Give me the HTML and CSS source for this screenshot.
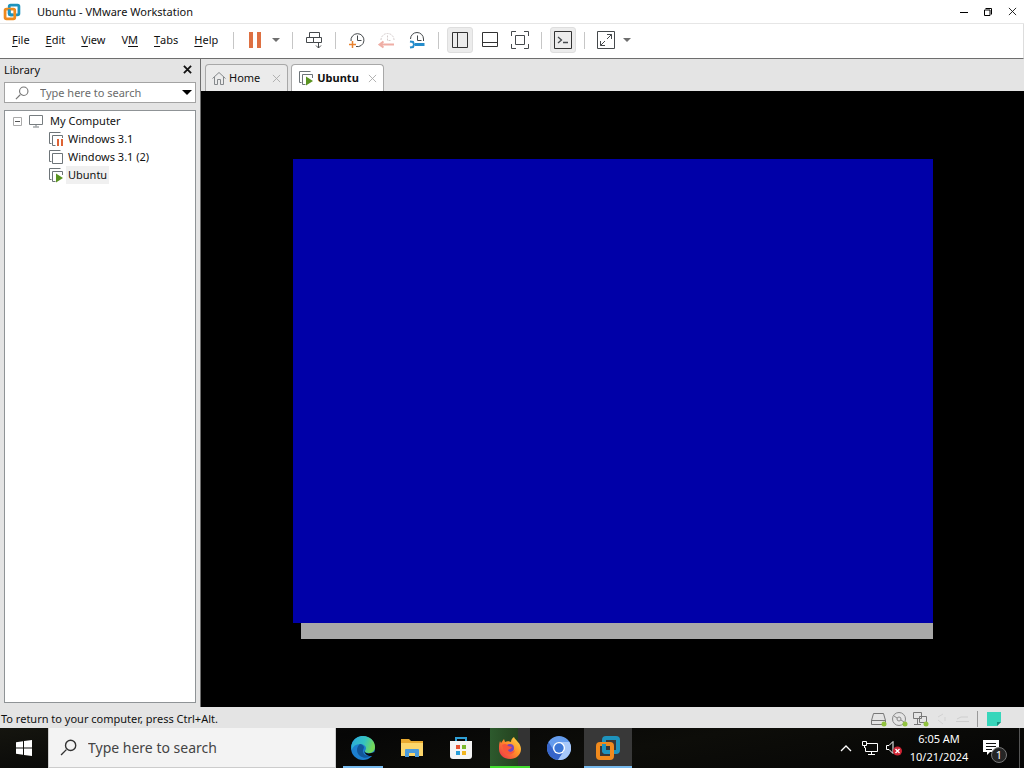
FILE: index.html
```html
<!DOCTYPE html>
<html lang="en">
<head>
  <meta charset="UTF-8" />
  <meta name="viewport" content="width=device-width, initial-scale=1.0" />
  <title>Ubuntu - VMware Workstation</title>
  <link rel="stylesheet" href="styles.css">
</head>
<body>
  <svg class="defs" aria-hidden="true">
    <symbol id="vmware" viewBox="0 0 26 26">
      <g fill="none" stroke-width="4" stroke-linejoin="round">
        <rect x="9" y="3" width="14" height="14" rx="2" stroke="#1e93bd" />
        <rect x="3" y="9" width="14" height="14" rx="2" stroke="#f08a1d" />
        <path d="M9 9v6a2 2 0 0 0 2 2h3" stroke="#1e93bd" />
      </g>
    </symbol>
    <symbol id="vm" viewBox="0 0 16 16">
      <path d="M12.500 1.500h-11v11h2M4.500 4.500h10v10h-10z" fill="none" stroke="#6d7478" />
    </symbol>
    <symbol id="vm-on" viewBox="0 0 16 16">
      <path d="M12.500 1.500h-11v11h2M14.500 8v-3.500h-10v10h3" fill="none" stroke="#6d7478" />
      <path d="M8 6.500l7 4.500-7 4.500z" fill="#5a9321" />
    </symbol>
    <symbol id="vm-paused" viewBox="0 0 16 16">
      <path d="M12.500 1.500h-11v11h2M14.500 7v-2.500h-10v10h3" fill="none" stroke="#6d7478" />
      <path d="M9 8h2v7h-2zM13 8h2v7h-2z" fill="#de6335" />
    </symbol>
    <symbol id="search" viewBox="0 0 16 16">
      <path d="M1 15l5-5" fill="none" stroke="currentColor" stroke-width="1.300" />
      <circle cx="10" cy="6" r="4.800" fill="none" stroke="currentColor" stroke-width="1.300" />
    </symbol>
    <symbol id="close" viewBox="0 0 10 10">
      <path d="M1 1l8 8M9 1l-8 8" fill="none" stroke="currentColor" />
    </symbol>
    <symbol id="arrow" viewBox="0 0 8 4">
      <path d="M0 0h8l-4 4z" fill="currentColor" />
    </symbol>
  </svg>

  <div class="window">
    <header class="titlebar">
      <svg class="logo"><use href="#vmware" /></svg>
      <h1>Ubuntu - VMware Workstation</h1>
      <div class="window-buttons">
        <button aria-label="Minimize"><svg width="10" height="10"><path d="M1 5.500h8" stroke="#000" /></svg></button>
        <button aria-label="Restore"><svg width="10" height="10"><path d="M1.500 3h5.500v5.500h-5.500z" fill="none" stroke="#000" /><path d="M2.500 1.500h6v6" fill="none" stroke="#000" /></svg></button>
        <button aria-label="Close"><svg width="9" height="9"><use href="#close" /></svg></button>
      </div>
    </header>

    <div class="menubar">
      <nav class="menus">
        <button><u>F</u>ile</button>
        <button><u>E</u>dit</button>
        <button><u>V</u>iew</button>
        <button>V<u>M</u></button>
        <button><u>T</u>abs</button>
        <button><u>H</u>elp</button>
      </nav>
      <div class="tools split">
        <button aria-label="Suspend"><svg width="14" height="16"><path d="M1 0h4v16h-4zM9 0h4v16h-4z" fill="#de7042" /></svg></button>
        <button class="drop" aria-label="Power options"><svg width="8" height="4"><use href="#arrow" /></svg></button>
      </div>
      <div class="tools">
        <button aria-label="Send Ctrl+Alt+Del"><svg width="18" height="18"><path d="M4.500 1.500h10v5h-10zM1.500 6.500h7v5h-7zM8.500 6.500h8v5h-8zM13.500 11v6M11 14.500l2.500 2.500 2.500-2.500" fill="none" stroke="#45494c" /></svg></button>
      </div>
      <div class="tools">
        <button aria-label="Take snapshot">
          <svg width="18" height="18"><path d="M3 10a6.500 6.500 0 1 1 5 5.500M9.500 4.500v5h4" fill="none" stroke="#45494c" /><path d="M4.500 10v7M1 13.500h7" stroke="#e8822f" stroke-width="1.500" /></svg>
        </button>
        <button aria-label="Revert snapshot" disabled>
          <svg width="18" height="18"><path d="M3 9a6.500 6.500 0 0 1 13 0M9.500 4.500v5h4" fill="none" stroke="#d4cccc" stroke-dasharray="2 1" /><path d="M2 13.500h14M5.500 10.500l-4 3 4 3" fill="none" stroke="#efaea5" stroke-width="2" /></svg>
        </button>
        <button aria-label="Manage snapshots">
          <svg width="18" height="18"><path d="M2.500 8a6.500 6.500 0 0 1 13 0v2M9.500 4.500v5h4" fill="none" stroke="#45494c" /><path d="M7 13.500h9.500" stroke="#258ccb" stroke-width="3" /><path d="M2 10.500l3 .5 1 2.500-1 2.500-3 .5" fill="none" stroke="#258ccb" stroke-width="2" /></svg>
        </button>
      </div>
      <div class="tools">
        <button class="pressed" aria-label="Show library"><svg width="18" height="18"><path d="M1.500 1.500h15v15h-15zM6.500 2v14" fill="none" stroke="#333" /></svg></button>
        <button aria-label="Show thumbnail bar"><svg width="18" height="18"><path d="M1.500 1.500h15v14h-15zM2 11.500h14" fill="none" stroke="#333" /></svg></button>
        <button aria-label="Full screen"><svg width="18" height="18"><path d="M4.500 4.500h9v9h-9zM.5 5v-4.500h4.500M13 .5h4.500v4.500M17.500 13v4.500h-4.500M5 17.500h-4.500v-4.500" fill="none" stroke="#45494c" /></svg></button>
      </div>
      <div class="tools">
        <button class="pressed" aria-label="Console view"><svg width="18" height="18"><path d="M.5.5h17v17h-17z" fill="none" stroke="#333" /><path d="M4 6l3.500 3-3.500 3M9 11.500h5" fill="none" stroke="#45494c" stroke-width="1.300" /></svg></button>
      </div>
      <div class="tools split">
        <button aria-label="Stretch guest"><svg width="18" height="18"><path d="M.5.5h17v17h-17zM10 8l4.500-4.500M10 3.500h4.500v4.500M8 10l-4.500 4.500M3.500 10v4.500h4.500" fill="none" stroke="#45494c" /></svg></button>
        <button class="drop" aria-label="Stretch options"><svg width="8" height="4"><use href="#arrow" /></svg></button>
      </div>
    </div>

    <div class="workspace">
      <aside class="library">
        <div class="library-header">
          <h2>Library</h2>
          <button aria-label="Close library"><svg width="9" height="9"><use href="#close" /></svg></button>
        </div>
        <div class="library-search">
          <svg width="14" height="14"><use href="#search" /></svg>
          <input type="text" placeholder="Type here to search" aria-label="Search library">
          <button aria-label="Search options"><svg width="10" height="5" viewBox="0 0 8 4"><use href="#arrow" /></svg></button>
        </div>
        <ul class="tree">
          <li class="root">
            <svg width="9" height="9"><path d="M.5.5h8v8h-8z" fill="none" stroke="#aaa" /><path d="M2 4.500h5" stroke="#555" /></svg>
            <svg width="16" height="14"><path d="M1.500 1.500h13v9h-13zM5 13h6M8 10.500v2" fill="none" stroke="#777d80" /></svg>
            <span>My Computer</span>
          </li>
          <li><svg width="16" height="16"><use href="#vm-paused" /></svg><span>Windows 3.1</span></li>
          <li><svg width="16" height="16"><use href="#vm" /></svg><span>Windows 3.1 (2)</span></li>
          <li class="selected"><svg width="16" height="16"><use href="#vm-on" /></svg><span>Ubuntu</span></li>
        </ul>
      </aside>

      <main class="console">
        <div class="tabs">
          <div class="tab">
            <svg width="14" height="14"><path d="M.5 7.500l6.500-6 6.500 6M2.500 6v7.500h3v-5h3v5h3v-7.500" fill="none" stroke="#85898c" /></svg>
            <a href="#home">Home</a>
            <button aria-label="Close Home"><svg width="9" height="9"><use href="#close" /></svg></button>
          </div>
          <div class="tab active">
            <svg width="16" height="16"><use href="#vm-on" /></svg>
            <a href="#ubuntu">Ubuntu</a>
            <button aria-label="Close Ubuntu"><svg width="9" height="9"><use href="#close" /></svg></button>
          </div>
        </div>
        <div class="guest">
          <div class="screen">
            <div class="screen-text"></div>
            <div class="screen-status"></div>
          </div>
        </div>
      </main>
    </div>

    <footer class="statusbar">
      <p>To return to your computer, press Ctrl+Alt.</p>
      <div class="devices">
        <svg width="18" height="16"><path d="M3.500 2.500h10l2 7h-14zM1.500 9.500h14v4h-14z" fill="none" stroke="#777" /><circle cx="14" cy="13" r="2.500" fill="#91c23e" /></svg>
        <svg width="18" height="16"><circle cx="8" cy="8" r="6.500" fill="none" stroke="#888" /><circle cx="8" cy="8" r="2" fill="none" stroke="#888" /><path d="M3 5l3 2M10 9l3 2" stroke="#888" /><circle cx="14" cy="13" r="2.500" fill="#91c23e" /></svg>
        <svg width="18" height="16"><path d="M1.500 1.500h8v6h-8zM7.500 5.500h7v6h-7zM5.500 8v5M2 13.500h7" fill="none" stroke="#777" /><circle cx="14" cy="13" r="2.500" fill="#91c23e" /></svg>
        <svg width="18" height="16"><path d="M5 6l5-3M5 9l5 4M12 6v4" fill="none" stroke="#d2d2d2" /></svg>
        <svg width="18" height="16"><path d="M3 8l4-2h7M2 10.500h13" fill="none" stroke="#cecece" /></svg>
      </div>
      <svg class="messages" width="16" height="16"><path d="M1 1h14v10l-4 4h-10z" fill="#38d6bb" /><path d="M15 11h-4v4z" fill="#168f7d" /></svg>
    </footer>
  </div>

  <div class="taskbar">
    <button class="start" aria-label="Start">
      <svg width="16" height="16"><path d="M0 2.200l7-1v6.300h-7zM8 1.100l8-1.100v7.500h-8zM0 8.500h7v6.300l-7-1zM8 8.500h8v7.500l-8-1.100z" fill="#fff" /></svg>
    </button>
    <label class="task-search">
      <svg width="17" height="17"><use href="#search" /></svg>
      <input type="text" placeholder="Type here to search" aria-label="Type here to search">
    </label>
    <div class="apps">
      <button class="app open" aria-label="Microsoft Edge">
        <svg width="26" height="26" viewBox="0 0 26 26">
          <defs><linearGradient id="edge" x1="0" y1="0" x2="1" y2=".3"><stop offset="0" stop-color="#2aa7e0" /><stop offset=".6" stop-color="#35c3c0" /><stop offset="1" stop-color="#74d858" /></linearGradient></defs>
          <circle cx="13" cy="13" r="12" fill="#1c7fd0" />
          <path d="M1.500 10c2-7 7-9 11.500-9 7 0 12 5 12 11 0 4-3 6-6 6s-4.500-1-4-2c3-4-1-7-5-7s-7 2-8.500 6z" fill="url(#edge)" />
          <path d="M10 9c-4 3-4 9 0 12 4 3 9 2 12-1-3 1.500-8 1-9-3-.5-2 1-3 1-5-1-2-2.500-3-4-3z" fill="#125699" />
          <path d="M14 15.500c1 3 5 4 10 1.500l1 1-1 2.500c-4 1.500-9 0-10-5z" fill="#080808" />
        </svg>
      </button>
      <button class="app" aria-label="File Explorer">
        <svg width="24" height="22" viewBox="0 0 24 22">
          <path d="M1 2h8l2 2h12v15h-22z" fill="#e9aa30" />
          <path d="M1 6h22v13h-22z" fill="#fcd66b" />
          <path d="M5 20v-7q0-1 1-1h12q1 0 1 1v7h-4v-4h-6v4z" fill="#4b9bdc" />
        </svg>
      </button>
      <button class="app" aria-label="Microsoft Store">
        <svg width="24" height="24" viewBox="0 0 24 24">
          <path d="M7 6v-4h10v4" fill="none" stroke="#2f9fd5" stroke-width="2" />
          <path d="M1 5h22v15q0 3-3 3h-16q-3 0-3-3z" fill="#f4f4f4" />
          <path d="M7 9h4v4h-4z" fill="#e65332" /><path d="M13 9h4v4h-4z" fill="#79b82d" />
          <path d="M7 15h4v4h-4z" fill="#2a9ed8" /><path d="M13 15h4v4h-4z" fill="#f1b51e" />
        </svg>
      </button>
      <button class="app attention" aria-label="Firefox">
        <svg width="24" height="24" viewBox="0 0 24 24">
          <defs><linearGradient id="fox" x1="1" y1="0" x2="0" y2="1"><stop offset="0" stop-color="#ffe34a" /><stop offset=".45" stop-color="#ff9229" /><stop offset="1" stop-color="#ec264f" /></linearGradient></defs>
          <path d="M2 5l1 2 3-4 1 3c2-1 4-1 6 0 0-2 1-4 3-5 1 3 7 6 7 12 0 6-5 10-11 10s-11-4-11-10c0-3 0-5 1-8z" fill="url(#fox)" />
          <circle cx="12" cy="12" r="4" fill="#7447bd" />
          <path d="M4 9c3-2 5-1 6 1l4 1c-1 2-3 2-4 3 1 3 5 2 7 0-1 5-8 6-11 2z" fill="#f9573a" />
        </svg>
      </button>
      <button class="app" aria-label="Chromium">
        <svg width="24" height="24" viewBox="0 0 24 24">
          <circle cx="12" cy="12" r="12" fill="#659ced" />
          <path d="M1.600 6a12 12 0 0 0 9.400 18l6-9-10 0z" fill="#3765c9" />
          <path d="M12 6h10.400a12 12 0 0 1-11.400 18l6-9z" fill="#a7c8fa" />
          <circle cx="12" cy="12" r="6" fill="#fff" /><circle cx="12" cy="12" r="4.700" fill="#3b76d6" />
        </svg>
      </button>
      <button class="app current" aria-label="VMware Workstation"><svg width="26" height="26"><use href="#vmware" /></svg></button>
    </div>
    <div class="tray">
      <button aria-label="Hidden icons"><svg width="12" height="8"><path d="M1 7l5-5 5 5" fill="none" stroke="#fff" stroke-width="1.300" /></svg></button>
      <button aria-label="Network"><svg width="18" height="16"><path d="M6 3.500h10.500v8h-12v-4M1.500 1.500h4v4h-4zM3.500 6v2M10.500 12v2M7 14.500h7" fill="none" stroke="#fff" /></svg></button>
      <button aria-label="Volume muted"><svg width="18" height="16"><path d="M1.500 5.500h2.500l4-4v12l-4-4h-2.500z" fill="none" stroke="#fff" /><circle cx="12.500" cy="11" r="4.500" fill="#cf2434" /><path d="M10.500 9l4 4M14.500 9l-4 4" stroke="#fff" stroke-width="1.300" /></svg></button>
      <div class="clock"><time>6:05 AM</time><time>10/21/2024</time></div>
      <button class="notifications" aria-label="1 notification">
        <svg width="18" height="18"><path d="M1 1h16v12h-9l-3 3v-3h-4z" fill="#fff" /><path d="M4 4.500h10M4 7.500h10M4 10.500h6" stroke="#111" /></svg>
        <span class="count">1</span>
      </button>
    </div>
  </div>
</body>
</html>
```
FILE: styles.css
```css
* {
  box-sizing: border-box;
  margin: 0;
  padding: 0;
}
body {
  display: flex;
  flex-direction: column;
  height: 100vh;
  overflow: hidden;
  font-family: 'Noto Sans', 'Open Sans', sans-serif;
  font-size: 11px;
  line-height: 18px;
  color: #111;
  background: #e4e4e4;
}
button, input {
  font: inherit;
  color: inherit;
  background: none;
  border: none;
}
button {
  display: flex;
  align-items: center;
  justify-content: center;
}
svg {
  flex-shrink: 0;
}
a {
  color: inherit;
  text-decoration: none;
}
input {
  min-width: 0;
  flex: 1;
  outline: none;
}
input::placeholder {
  color: #6b6b6b;
  opacity: 1;
}
.defs {
  display: none;
}
.window {
  flex: 1;
  min-height: 0;
  display: flex;
  flex-direction: column;
}

/* title bar */
.titlebar {
  display: flex;
  align-items: center;
  height: 24px;
  padding-left: 3px;
  background: #fff;
  border-bottom: 1px solid #e6e6e6;
}
.logo {
  width: 18px;
  height: 18px;
  margin-right: 16px;
}
h1, h2 {
  font-size: 11px;
  font-weight: normal;
}
.window-buttons {
  display: flex;
  margin-left: auto;
}
.window-buttons button {
  width: 24px;
  height: 22px;
}

/* menus and toolbar */
.menubar {
  display: flex;
  align-items: center;
  height: 35px;
  padding: 0 0 2px 12px;
  background: #fff;
  border-right: 1px solid #ddd;
  border-bottom: 1px solid #6e6e6e;
}
.menus {
  display: flex;
  gap: 16px;
  margin-right: 15px;
}
u {
  text-underline-offset: 2px;
}
.tools {
  display: flex;
  gap: 4px;
}
.tools::before {
  content: '';
  align-self: center;
  width: 1px;
  height: 17px;
  margin-right: 4px;
  background: #c6c6c6;
}
.tools + .tools {
  margin-left: 8px;
}
.tools button {
  width: 26px;
  height: 26px;
  border-radius: 3px;
}
.tools.split {
  gap: 0;
}
.tools.split::before {
  margin-right: 8px;
}
.tools .drop {
  width: 16px;
  color: #6e6e6e;
}
.tools .pressed {
  background: #ececec;
  border: 1px solid #dedede;
}

.workspace {
  flex: 1;
  min-height: 0;
  display: flex;
}

/* library */
.library {
  flex: 0 0 200px;
  min-width: 0;
  display: flex;
  flex-direction: column;
  padding: 0 4px 4px;
}
.library-header {
  display: flex;
  align-items: center;
  justify-content: space-between;
  height: 23px;
  padding-bottom: 2px;
}
.library-header button {
  width: 18px;
  height: 18px;
}
.library-header svg {
  stroke-width: 2px;
}
.library-search {
  display: flex;
  align-items: center;
  height: 21px;
  margin-bottom: 7px;
  padding: 0 3px 0 10px;
  background: #fff;
  border: 1px solid #a3a3a3;
  color: #777;
}
.library-search input {
  width: 100%;
  margin-left: 11px;
}
.library-search button {
  color: #000;
}
.tree {
  flex: 1;
  padding-top: 1px;
  list-style: none;
  background: #fff;
  border: 1px solid #8f9396;
}
.tree li {
  display: flex;
  align-items: center;
  gap: 2px;
  height: 18px;
  padding-left: 43px;
}
.tree .root {
  gap: 6px;
  padding-left: 8px;
}
.tree span {
  padding: 0 2px;
}
.tree .root span {
  padding: 0;
}
.tree .selected span {
  background: #f0f0f0;
}

/* tabs and guest display */
.console {
  flex: 1;
  min-width: 0;
  display: flex;
  flex-direction: column;
  border-left: 1px solid #6e6e6e;
}
.tabs {
  display: flex;
  align-items: flex-end;
  gap: 3px;
  height: 32px;
  padding-left: 4px;
}
.tab {
  display: flex;
  align-items: center;
  gap: 3px;
  height: 27px;
  padding: 0 6px;
  background: #ebebeb;
  border: 1px solid #a8a8a8;
  border-bottom: none;
  border-radius: 4px 4px 0 0;
}
.tab button {
  width: 9px;
  margin-left: 9px;
  color: #aaa;
}
.tab.active {
  background: #fff;
  font-weight: bold;
}
.tab.active button {
  margin-left: 6px;
}
.guest {
  flex: 1;
  min-height: 0;
  display: flex;
  align-items: center;
  justify-content: center;
  background: #000;
}
.screen {
  display: flex;
  flex-direction: column;
  width: 640px;
  max-width: 100%;
  aspect-ratio: 4 / 3;
}
.screen-text {
  flex: 1;
  background: #0000a8;
}
.screen-status {
  height: 16px;
  margin-left: 8px;
  background: #a8a8a8;
}

/* status bar */
.statusbar {
  display: flex;
  align-items: center;
  height: 21px;
  padding: 2px 22px 0 1px;
}
.devices {
  display: flex;
  gap: 3px;
  margin-left: auto;
  padding-right: 5px;
  border-right: 1px solid #999;
}
.messages {
  margin-left: 8px;
}

/* windows taskbar */
.taskbar {
  display: flex;
  height: 40px;
  background: linear-gradient(170deg, #15150f, #060606 30%, #0d0d09 60%, #050505);
  color: #fff;
}
.start {
  width: 48px;
}
.task-search {
  display: flex;
  align-items: center;
  flex: 0 1 288px;
  padding-left: 11px;
  background: #f3f3f3;
  border: 1px solid #ccc;
  border-top: none;
  color: #333;
}
.task-search input {
  margin-left: 11px;
  font-size: 14px;
}
.task-search input::placeholder {
  color: #444;
}
.apps {
  display: flex;
  gap: 1px;
  margin-left: 3px;
}
.app {
  width: 48px;
}
.open {
  width: 40px;
  margin: 0 4px;
  box-shadow: inset 0 -2px #76b9ed;
}
.attention {
  width: 40px;
  margin: 0 4px;
  background: linear-gradient(to right, #2d5a2d, #24421f 70%, #333 71%);
  box-shadow: inset 0 -2px #41dc2e;
}
.current {
  background: #383838;
  box-shadow: inset 0 -2px #76b9ed;
}
.tray {
  display: flex;
  margin-left: auto;
  padding-right: 4px;
}
.tray > button {
  width: 24px;
}
.clock {
  display: flex;
  flex-direction: column;
  justify-content: center;
  width: 66px;
  text-align: center;
}
.tray .notifications {
  position: relative;
  width: 48px;
  padding-right: 9px;
  border-right: 1px solid #555;
}
.count {
  position: absolute;
  left: 19px;
  bottom: 5px;
  width: 16px;
  height: 16px;
  line-height: 14px;
  background: #252525;
  border: 1px solid #777;
  border-radius: 50%;
}
```
